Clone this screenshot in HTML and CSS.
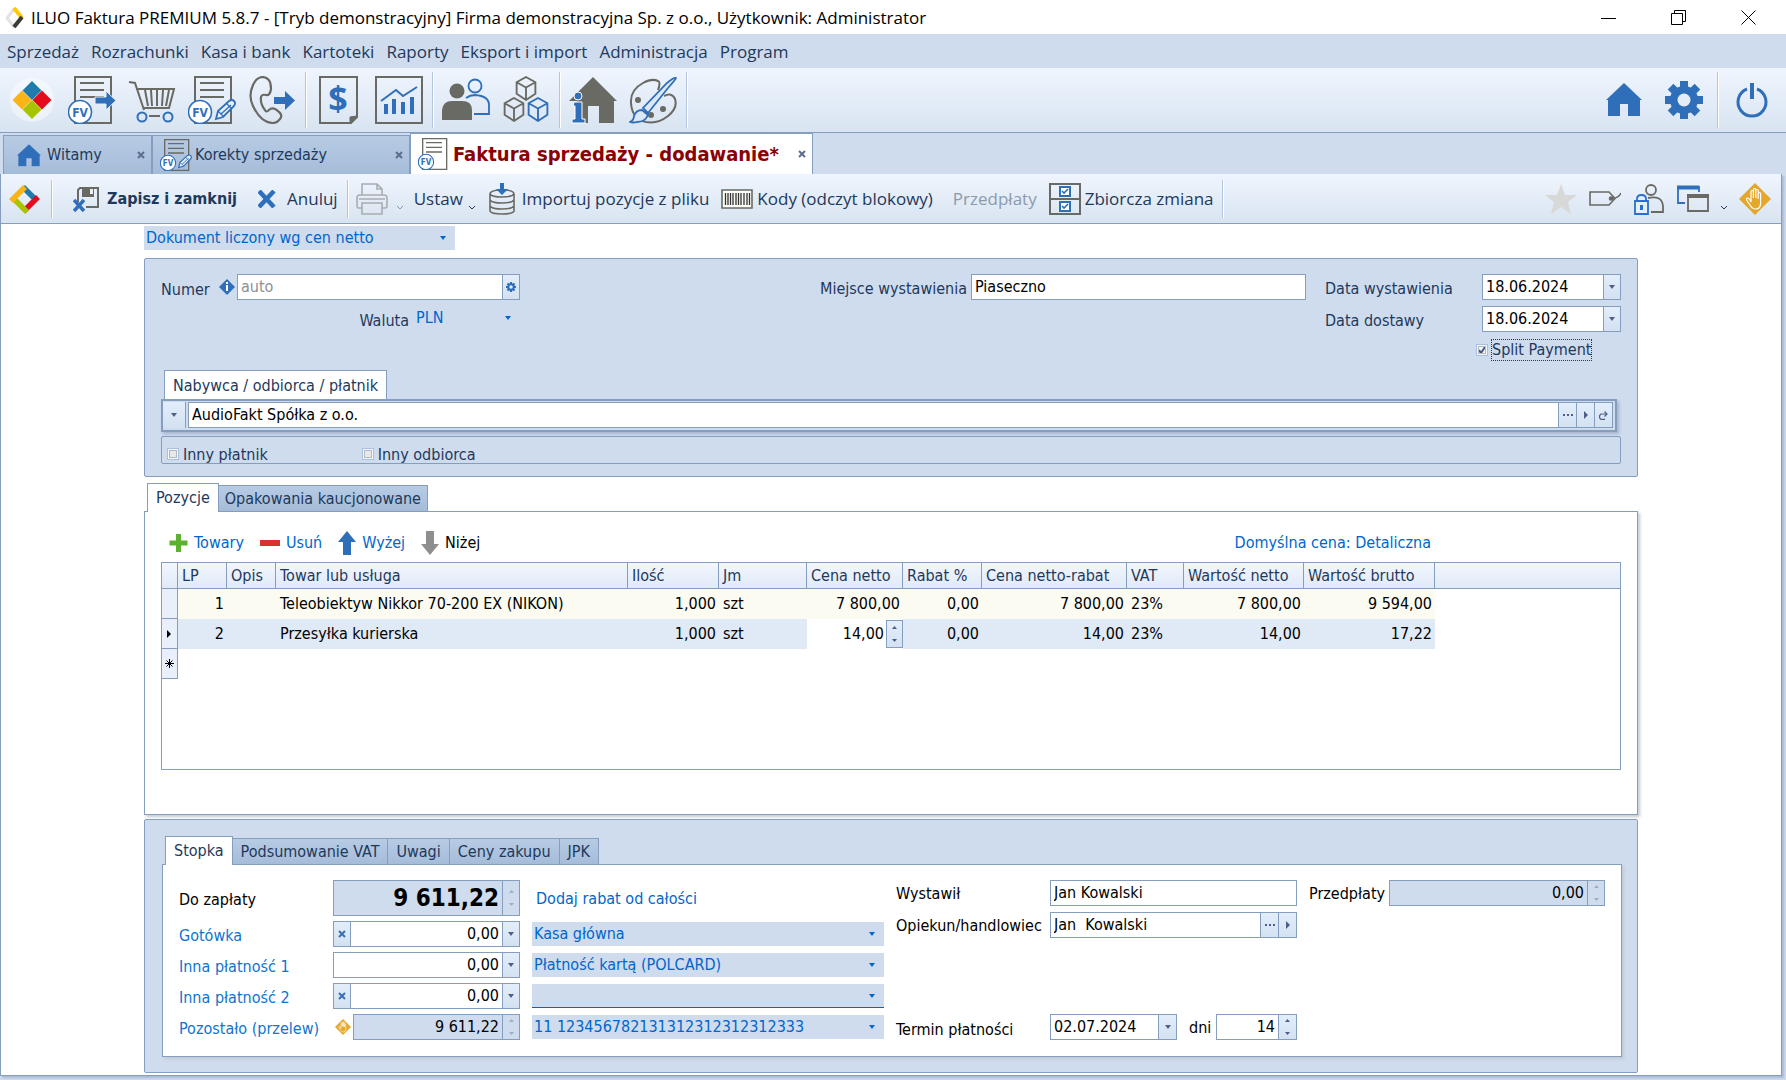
FILE: index.html
```
<!DOCTYPE html>
<html lang="pl">
<head>
  <meta charset="utf-8">
  <title>ILUO Faktura PREMIUM 5.8.7</title>
  <link rel="stylesheet" href="styles.css">
</head>
<body>

  <!-- shared icons -->
  <svg class="sprite" aria-hidden="true">
    <symbol id="i-doc" viewBox="0 0 48 48">
      <path d="M7 1h36v46H7z" fill="none" stroke="#6a6a64" stroke-width="2"/>
      <path d="M12 7h24M12 14h24M12 21h24" stroke="#6a6a64" stroke-width="2"/>
      <circle cx="12" cy="36" r="11.5" fill="#fff" stroke="#2f6fba" stroke-width="1.6"/>
      <text x="12" y="41" text-anchor="middle" class="fv">FV</text>
    </symbol>
    <symbol id="i-pen" viewBox="0 0 48 48">
      <path d="M28 43l2-8 11-10q3-2 5 0t0 5l-11 11z" fill="#e8eff8" stroke="#2f6fba" stroke-width="1.8"/>
      <path d="M30 35l6 6M38 27l6 6M33 38l10-9" fill="none" stroke="#2f6fba" stroke-width="1.3"/>
    </symbol>
    <symbol id="i-home" viewBox="0 0 36 34">
      <path d="M18 0l18 17h-2v16H22V21h-8v12H2V17H0z" fill="#2f6fba"/>
    </symbol>
    <symbol id="i-x" viewBox="0 0 8 8"><path d="M1 1l6 6M7 1l-6 6" stroke="currentColor" stroke-width="2"/></symbol>
    <symbol id="i-down" viewBox="0 0 6 4"><path d="M0 0h6L3 4z" fill="currentColor"/></symbol>
    <symbol id="i-right" viewBox="0 0 4 8"><path d="M0 0v8l4-4z" fill="currentColor"/></symbol>
    <symbol id="i-dots" viewBox="0 0 10 2"><path d="M0 1h2m2 0h2m2 0h2" stroke="currentColor" stroke-width="2"/></symbol>
    <symbol id="i-spin" viewBox="0 0 5 16"><path d="M0 3h5L2.500 0zM0 13h5L2.500 16z" fill="currentColor"/></symbol>
    <symbol id="i-gear" viewBox="0 0 38 38">
      <g fill="#2f6fba"><path d="M15 0h8v38h-8zM0 15h38v8H0z"/><path d="M15 0h8v38h-8zM0 15h38v8H0z" transform="rotate(45 19 19)"/><circle cx="19" cy="19" r="14"/></g>
      <circle cx="19" cy="19" r="6.500" fill="#e4edf7"/>
    </symbol>
    <symbol id="i-hand" viewBox="0 0 32 32">
      <path d="M16 0l16 16-16 16L0 16z" fill="#e5a72a"/>
      <path d="M12 17V9q0-1.500 1.200-1.500T14.400 9v6V7q0-1.500 1.200-1.500T16.800 7v8V8q0-1.500 1.200-1.500T19.200 8v8-5q0-1.500 1.200-1.500t1.200 1.500v9q0 6-5 6-3 0-5-3l-4-6q-.5-2 1-2t3.400 4z" fill="none" stroke="#fff" stroke-width="1.200"/>
    </symbol>
    <symbol id="i-cube" viewBox="0 0 22 24">
      <path d="M11 1l9 5v11l-9 6-9-6V6zM2 6l9 5 9-5M11 11v12" fill="none" stroke="currentColor" stroke-width="1.800"/>
    </symbol>
  </svg>

  <header class="titlebar">
    <svg class="app-icon" viewBox="0 0 18 22"><path d="M9 1l-8 10 8 10" fill="none" stroke="#e3e3e3" stroke-width="3"/><path d="M8 1l8 10" stroke="#ffc800" stroke-width="4"/><path d="M16 10L8 20" stroke="#3a3a38" stroke-width="4"/></svg>
    <h1>ILUO Faktura PREMIUM 5.8.7 - [Tryb demonstracyjny] Firma demonstracyjna Sp. z o.o., Użytkownik: Administrator</h1>
    <div class="window-buttons">
      <button aria-label="Minimalizuj"><svg viewBox="0 0 16 16"><path d="M0 8.500h15"/></svg></button>
      <button aria-label="Przywróć"><svg viewBox="0 0 16 16"><path d="M.5 3.500h11v11H.5zM3.500 3V.5h11v11H12"/></svg></button>
      <button aria-label="Zamknij"><svg viewBox="0 0 16 16"><path d="M.5.5l14 14M14.500.5l-14 14"/></svg></button>
    </div>
  </header>

  <nav class="menu">
    <a href="#">Sprzedaż</a>
    <a href="#">Rozrachunki</a>
    <a href="#">Kasa i bank</a>
    <a href="#">Kartoteki</a>
    <a href="#">Raporty</a>
    <a href="#">Eksport i import</a>
    <a href="#">Administracja</a>
    <a href="#">Program</a>
  </nav>

  <div class="toolbar">
    <div class="tool-group">
      <button aria-label="ILUO"><svg viewBox="0 0 48 48"><circle cx="24" cy="24" r="22" fill="#fff" opacity=".45"/><path d="M24 5l9.500 9.500L24 24l-9.500-9.500z" fill="#1f7bab"/><path d="M34 14.500l9.500 9.500-9.500 9.500L24.500 24z" fill="#e30b1c"/><path d="M24 24l9.500 9.500L24 43l-9.500-9.500z" fill="#a8c400"/><path d="M14 14.500l9.500 9.500-9.500 9.500L4.500 24z" fill="#fbb417"/></svg></button>
      <button aria-label="Faktura sprzedaży"><svg viewBox="0 0 48 48"><use href="#i-doc"/><path d="M27 21h11v-6l10 9.500L38 34v-6H27z" fill="#2f6fba" stroke="#e8eff8" stroke-width="1"/></svg></button>
      <button aria-label="Zakupy"><svg viewBox="0 0 48 48" fill="none" stroke="#6a6a64" stroke-width="2"><path d="M1 6l6 1 9 27M8 13h38l-5 19H15M17 14l3 16M23 14l1 16M29 14v16M35 14l-1 16M41 14l-3 16M21 40h11"/><circle cx="14" cy="41" r="4.500" stroke="#2f6fba"/><circle cx="40" cy="41" r="4.500" stroke="#2f6fba"/></svg></button>
      <button aria-label="Korekty"><svg viewBox="0 0 48 48"><use href="#i-doc"/><use href="#i-pen"/></svg></button>
      <button aria-label="Kontakty"><svg viewBox="0 0 48 48"><path d="M14 1q-6 1-9 8-5 11 0 21 8 17 20 17 4 0 7-4 3-4-1-7-6-6-10-2-3 3-4 0-5-6-4-13 1-3 5-2 4 1 5-6 0-12-9-12z" fill="none" stroke="#6a6a64" stroke-width="2.200"/><path d="M26 21h11v-6l10 9.500L37 34v-6H26z" fill="#2f6fba"/></svg></button>
    </div>
    <div class="tool-group">
      <button aria-label="Płatności"><svg viewBox="0 0 48 48"><path d="M5 1h37v40l-6 6H5z" fill="none" stroke="#6a6a64" stroke-width="2"/><path d="M42 40l-7 7v-6z" fill="#6a6a64" stroke="#6a6a64"/><text x="23" y="35" text-anchor="middle" class="dollar">$</text></svg></button>
      <button aria-label="Raporty"><svg viewBox="0 0 48 48"><path d="M1 1h46v46H1z" fill="none" stroke="#6a6a64" stroke-width="2"/><path d="M6 25l15-11 7 6 14-9" fill="none" stroke="#2f6fba" stroke-width="2"/><path d="M11 28v10M19 23v15M28 26v12M37 21v17" stroke="#2f6fba" stroke-width="4"/></svg></button>
    </div>
    <div class="tool-group">
      <button aria-label="Kontrahenci"><svg viewBox="0 0 48 48"><circle cx="15" cy="15" r="7.500" fill="#6a6a64"/><path d="M0 44V34q1-9 10-9h10q10 0 10 9v10z" fill="#6a6a64"/><circle cx="33" cy="10" r="6.500" fill="none" stroke="#2f6fba" stroke-width="1.800"/><path d="M24 22q4-3 9-3 14 1 14 10v9H32" fill="none" stroke="#2f6fba" stroke-width="1.800"/></svg></button>
      <button aria-label="Towary"><svg viewBox="0 0 48 48" class="cubes"><use href="#i-cube" x="12" y="0" width="24" height="25"/><use href="#i-cube" x="0" y="21" width="24" height="25"/><use href="#i-cube" x="24" y="21" width="24" height="25" class="blue"/></svg></button>
    </div>
    <div class="tool-group">
      <button aria-label="Firma"><svg viewBox="0 0 48 48"><path d="M24 1l24 24h-3v22H30V30H19v17H8V25H0z" fill="#6a6a64"/><path d="M5 26h8v17h3v4H3v-4h3V30H4z" fill="#2f6fba" stroke="#fff" stroke-width="1"/><circle cx="9" cy="20" r="4" fill="#2f6fba" stroke="#fff"/></svg></button>
      <button aria-label="Wygląd"><svg viewBox="0 0 48 48"><path d="M29 14q3-8 0-9-6-3-15 2Q1 14 2 27q1 16 15 19 12 2 22-6 10-8 7-17-3-7-11-3" fill="none" stroke="#6a6a64" stroke-width="2"/><g fill="#6a6a64"><circle cx="9" cy="24" r="3"/><circle cx="22" cy="39" r="3"/><circle cx="34" cy="33" r="3"/></g><path d="M47 2q-2-1-9 5L14 32l5 5 20-25q8-9 8-10zM13 34l6 5q-3 7-11 7-4 1-7 0 4-2 4-6 2-6 8-6z" fill="#dce8f5" stroke="#2f6fba" stroke-width="1.800"/></svg></button>
    </div>
    <div class="tool-group tool-group-end">
      <button aria-label="Start"><svg viewBox="0 0 48 48"><use href="#i-home" x="6" y="7" width="36" height="34"/></svg></button>
      <button aria-label="Ustawienia"><svg viewBox="0 0 48 48"><use href="#i-gear" x="5" y="5" width="38" height="38"/></svg></button>
    </div>
    <div class="tool-last">
      <button aria-label="Wyjście"><svg viewBox="0 0 48 48" fill="none" stroke="#2f6fba"><path d="M19 13a14 14 0 1 0 10 0" stroke-width="3"/><path d="M24 7v16" stroke-width="4"/></svg></button>
    </div>
  </div>

  <div class="tabs">
    <div class="tab">
      <svg class="tab-home" viewBox="0 0 36 34"><use href="#i-home"/></svg>
      <span>Witamy</span>
      <button class="tab-close" aria-label="Zamknij"><svg><use href="#i-x"/></svg></button>
    </div>
    <div class="tab tab-wide">
      <svg class="tab-doc" viewBox="0 0 48 48"><use href="#i-doc"/><use href="#i-pen"/></svg>
      <span>Korekty sprzedaży</span>
      <button class="tab-close" aria-label="Zamknij"><svg><use href="#i-x"/></svg></button>
    </div>
    <div class="tab tab-active">
      <svg class="tab-doc" viewBox="0 0 48 48"><use href="#i-doc"/></svg>
      <span>Faktura sprzedaży - dodawanie*</span>
      <button class="tab-close" aria-label="Zamknij"><svg><use href="#i-x"/></svg></button>
    </div>
  </div>

  <main class="document">
    <div class="actions">
      <button class="logo" aria-label="ILUO"><svg viewBox="0 0 32 32" fill="none" stroke-width="5.500"><path d="M14 4l13 13" stroke="#1f7bab"/><path d="M29 14L15 28" stroke="#e30b1c"/><path d="M18 29L4 15" stroke="#a8c400"/><path d="M2 18L16 4" stroke="#fbb417"/></svg></button>
      <i class="sep"></i>
      <button class="strong"><svg class="ic-save" viewBox="0 0 26 26"><path d="M5 16V4l2-2h18v19H13" fill="none" stroke="#6a6a64" stroke-width="2"/><path d="M9 2h12v9H9z" fill="#6a6a64"/><path d="M17 3h3v5h-3z" fill="#eee"/><path d="M1 14l10 11M11 14L1 25" stroke="#2f6fba" stroke-width="3.500"/></svg>Zapisz i zamknij</button>
      <button class="cancel"><svg class="ic-cancel" viewBox="0 0 18 18"><path d="M1 1l15 16M16 1L1 17" stroke="#2f6fba" stroke-width="4.500"/></svg>Anuluj</button>
      <i class="sep"></i>
      <button aria-label="Drukuj" disabled><svg class="ic-32" viewBox="0 0 32 32" fill="none" stroke="#a9adb0" stroke-width="1.600"><path d="M6 12V1h15l5 5v6M21 1v5h5M6 25H2q-1-1-1-2v-8q0-3 3-3h24q3 0 3 3v8q0 2-2 2h-3M6 20h20v11H6zM3 16h26"/></svg></button>
      <svg class="caret caret-off" viewBox="0 0 6 5"><path d="M0 1l3 3 3-3"/></svg>
      <button>Ustaw</button>
      <svg class="caret" viewBox="0 0 6 5"><path d="M0 1l3 3 3-3"/></svg>
      <button class="import"><svg class="ic-db" viewBox="0 0 26 32" fill="none" stroke="#6a6a64" stroke-width="1.600"><path d="M9 7q-8 1-8 4v17q1 3 12 3t12-3V11q0-3-8-4M1 11q2 3 12 3t12-3M1 17q2 3 12 3t12-3M1 23q2 3 12 3t12-3"/><path d="M11 0h4v6h4l-6 6-6-6h4z" fill="#2f6fba" stroke="none"/></svg>Importuj pozycje z pliku</button>
      <button class="codes"><svg class="ic-codes" viewBox="0 0 32 20"><path d="M1 1h30v18H1z" fill="#fdfdf8" stroke="#6a6a64" stroke-width="1.600"/><path d="M4.500 4v12M7 4v12M9.500 4v12M12 4v12M15 4v12M17.500 4v12M20 4v12M23 4v12M26 4v12M28.500 4v12" stroke="#333" stroke-width="1.300"/></svg>Kody (odczyt blokowy)</button>
      <button disabled>Przedpłaty</button>
      <button class="bulk"><svg class="ic-32" viewBox="0 0 32 32" fill="none"><path d="M1 1h30v30H1zM1 16h30" stroke="#6a6a64" stroke-width="2"/><path d="M11 4h10v9H11zM11 19h10v9H11z" stroke="#2f6fba" stroke-width="2" fill="#fff"/><path d="M13 8l2 2 4-4M13 23l2 2 4-4" stroke="#2f6fba" stroke-width="1.600"/></svg>Zbiorcza zmiana</button>
      <i class="sep"></i>
      <div class="actions-end">
        <button aria-label="Ulubione"><svg class="ic-32" viewBox="0 0 32 32"><path d="M16 1l4 11h12l-9 7 3 12-10-7-10 7 3-12-9-7h12z" fill="#d8d8d8"/></svg></button>
        <button aria-label="Etykieta"><svg class="ic-32" viewBox="0 0 32 32" fill="none" stroke="#6a6a64" stroke-width="1.600"><path d="M1 9h19l6 6.500-6 6.500H1zM22 15q7 1 10-5"/><circle cx="22" cy="15.500" r="1.500" fill="#6a6a64"/></svg></button>
        <button aria-label="Uprawnienia"><svg class="ic-32" viewBox="0 0 32 32" fill="none" stroke="#6a6a64" stroke-width="1.800"><circle cx="18" cy="7" r="5"/><path d="M15 15q14-3 15 8v6H18"/><path d="M2 18h13v13H2zM4 18v-2q0-4 4.500-4t4.500 4v2" fill="#e6eef8" stroke="#2a6fd0"/><path d="M8.500 22v5" stroke="#2a6fd0" stroke-width="3"/></svg></button>
        <button aria-label="Okna"><svg class="ic-32" viewBox="0 0 32 32" fill="none"><path d="M8 20H1V4h21v5" stroke="#2f6fba" stroke-width="1.800"/><path d="M0 4.500h22" stroke="#2f6fba" stroke-width="4"/><path d="M11 12h20v16H11z" stroke="#6a6a64" stroke-width="1.800"/><path d="M10 13h22" stroke="#6a6a64" stroke-width="4"/></svg></button>
        <svg class="caret" viewBox="0 0 6 5"><path d="M0 1l3 3 3-3"/></svg>
        <button aria-label="Blokada"><svg class="ic-32"><use href="#i-hand"/></svg></button>
      </div>
    </div>

    <form class="content">
      <select class="link-select doc-kind" aria-label="Rodzaj dokumentu"><option>Dokument liczony wg cen netto</option></select>

      <section class="panel head">
        <div class="head-row">
          <div class="number">
            <label for="numer">Numer</label>
            <svg class="info" viewBox="0 0 16 16"><path d="M8 0l8 8-8 8-8-8z" fill="#2f6fba"/><path d="M8 3v2M8 6v6" stroke="#fff" stroke-width="2"/></svg>
            <div class="field">
              <input id="numer" type="text" placeholder="auto">
              <button type="button" aria-label="Numeracja"><svg class="g-gear"><use href="#i-gear"/></svg></button>
            </div>
            <div class="currency">
              <label for="waluta">Waluta</label>
              <select id="waluta" class="link-select"><option>PLN</option></select>
            </div>
          </div>
          <div class="place">
            <label for="miejsce">Miejsce wystawienia</label>
            <div class="field"><input id="miejsce" type="text" value="Piaseczno"></div>
          </div>
          <div class="dates">
            <label for="data-w">Data wystawienia</label>
            <div class="field"><input id="data-w" type="text" value="18.06.2024"><button type="button" aria-label="Kalendarz"><svg class="g-down"><use href="#i-down"/></svg></button></div>
            <label for="data-d">Data dostawy</label>
            <div class="field"><input id="data-d" type="text" value="18.06.2024"><button type="button" aria-label="Kalendarz"><svg class="g-down"><use href="#i-down"/></svg></button></div>
            <div class="check split"><input id="split" type="checkbox" checked><label for="split">Split Payment</label></div>
          </div>
        </div>

        <div class="buyer">
          <label class="buyer-tab" for="nabywca">Nabywca / odbiorca / płatnik</label>
          <div class="buyer-box">
            <button type="button" class="buyer-drop" aria-label="Rozwiń"><svg class="g-down"><use href="#i-down"/></svg></button>
            <div class="field">
              <input id="nabywca" type="text" value="AudioFakt Spółka z o.o.">
              <button type="button" aria-label="Wybierz"><svg class="g-dots"><use href="#i-dots"/></svg></button>
              <button type="button" aria-label="Otwórz"><svg class="g-right"><use href="#i-right"/></svg></button>
              <button type="button" aria-label="Odśwież"><svg class="g-redo" viewBox="0 0 9 9"><path d="M6 8.400H2L.6 7V4.500L2 3h6M5.500.5L8 3 5.500 5.500" fill="none" stroke="currentColor" stroke-width="1.200"/></svg></button>
            </div>
          </div>
          <div class="others">
            <div class="check"><input id="platnik" type="checkbox"><label for="platnik">Inny płatnik</label></div>
            <div class="check"><input id="odbiorca" type="checkbox"><label for="odbiorca">Inny odbiorca</label></div>
          </div>
        </div>
      </section>

      <div class="page-tabs">
        <button type="button" class="active">Pozycje</button>
        <button type="button">Opakowania kaucjonowane</button>
      </div>
      <section class="page items">
        <div class="commands">
          <a href="#"><svg class="c-plus" viewBox="0 0 18 18"><path d="M9 0v18M0 9h18" stroke="#5cb130" stroke-width="5"/></svg>Towary</a>
          <a href="#"><svg class="c-minus" viewBox="0 0 20 18"><path d="M0 9h20" stroke="#d93030" stroke-width="6"/></svg>Usuń</a>
          <a href="#"><svg class="c-arrow" viewBox="0 0 18 24"><path d="M9 0l9 11h-5v13H5V11H0z" fill="#2f6fba"/></svg>Wyżej</a>
          <a href="#" class="off"><svg class="c-arrow" viewBox="0 0 18 24"><path d="M9 24l9-11h-5V0H5v13H0z" fill="#8e8e8e"/></svg>Niżej</a>
          <a href="#" class="price">Domyślna cena: Detaliczna</a>
        </div>
        <div class="grid">
          <table>
            <colgroup><col class="w-mark"><col class="w-lp"><col class="w-lp"><col class="w-name"><col class="w-qty"><col class="w-jm"><col class="w-price"><col class="w-disc"><col class="w-net"><col class="w-vat"><col class="w-sum"><col class="w-gross"><col></colgroup>
            <thead>
              <tr><th></th><th>LP</th><th>Opis</th><th>Towar lub usługa</th><th>Ilość</th><th>Jm</th><th>Cena netto</th><th>Rabat %</th><th>Cena netto-rabat</th><th>VAT</th><th>Wartość netto</th><th>Wartość brutto</th><th></th></tr>
            </thead>
            <tbody>
              <tr class="odd"><td class="mark"></td><td class="num">1</td><td></td><td>Teleobiektyw Nikkor 70-200 EX (NIKON)</td><td class="num">1,000</td><td>szt</td><td class="num">7 800,00</td><td class="num">0,00</td><td class="num">7 800,00</td><td>23%</td><td class="num">7 800,00</td><td class="num">9 594,00</td><td></td></tr>
              <tr class="current"><td class="mark"><svg class="g-right"><use href="#i-right"/></svg></td><td class="num">2</td><td></td><td>Przesyłka kurierska</td><td class="num">1,000</td><td>szt</td><td class="editing"><div class="cell-edit"><input type="text" value="14,00" aria-label="Cena netto"><button type="button" aria-label="Zmień"><svg class="g-spin"><use href="#i-spin"/></svg></button></div></td><td class="num">0,00</td><td class="num">14,00</td><td>23%</td><td class="num">14,00</td><td class="num">17,22</td><td></td></tr>
              <tr><td class="mark"><svg class="g-star" viewBox="0 0 9 9"><path d="M4.500 0v9M0 4.500h9M1.500 1.500l6 6M7.500 1.500l-6 6" stroke="currentColor" stroke-width="1"/></svg></td><td colspan="12"></td></tr>
            </tbody>
          </table>
        </div>
      </section>

      <section class="panel foot">
        <div class="page-tabs">
          <button type="button" class="active">Stopka</button>
          <button type="button">Podsumowanie VAT</button>
          <button type="button">Uwagi</button>
          <button type="button">Ceny zakupu</button>
          <button type="button">JPK</button>
        </div>
        <div class="page summary">
          <div class="payments">
            <label for="zaplata">Do zapłaty</label>
            <div class="field field-off total"><input id="zaplata" type="text" value="9 611,22" readonly><button type="button" aria-label="Zmień" disabled><svg class="g-spin"><use href="#i-spin"/></svg></button></div>
            <a href="#" class="discount">Dodaj rabat od całości</a>

            <label for="gotowka" class="blue-text">Gotówka</label>
            <div class="field money"><button type="button" class="clear" aria-label="Wyczyść"><svg><use href="#i-x"/></svg></button><input id="gotowka" type="text" value="0,00"><button type="button" aria-label="Rozwiń"><svg class="g-down"><use href="#i-down"/></svg></button></div>
            <select class="link-select" aria-label="Kasa"><option>Kasa główna</option></select>

            <label for="inna1" class="blue-text">Inna płatność 1</label>
            <div class="field money"><input id="inna1" type="text" value="0,00"><button type="button" aria-label="Rozwiń"><svg class="g-down"><use href="#i-down"/></svg></button></div>
            <select class="link-select" aria-label="Forma płatności 1"><option>Płatność kartą (POLCARD)</option></select>

            <label for="inna2" class="blue-text">Inna płatność 2</label>
            <div class="field money"><button type="button" class="clear" aria-label="Wyczyść"><svg><use href="#i-x"/></svg></button><input id="inna2" type="text" value="0,00"><button type="button" aria-label="Rozwiń"><svg class="g-down"><use href="#i-down"/></svg></button></div>
            <select class="link-select empty" aria-label="Forma płatności 2"><option></option></select>

            <label for="przelew" class="blue-text">Pozostało (przelew)</label>
            <div class="rest">
              <svg class="hand-small"><use href="#i-hand"/></svg>
              <div class="field field-off money"><input id="przelew" type="text" value="9 611,22" readonly><button type="button" aria-label="Zmień" disabled><svg class="g-spin"><use href="#i-spin"/></svg></button></div>
            </div>
            <select class="link-select" aria-label="Konto"><option>11 123456782131312312312312333</option></select>
          </div>

          <div class="people">
            <label for="wystawil">Wystawił</label>
            <div class="field"><input id="wystawil" type="text" value="Jan Kowalski"></div>
            <label for="opiekun">Opiekun/handlowiec</label>
            <div class="field"><input id="opiekun" type="text" value="Jan  Kowalski"><button type="button" aria-label="Wybierz"><svg class="g-dots"><use href="#i-dots"/></svg></button><button type="button" aria-label="Otwórz"><svg class="g-right"><use href="#i-right"/></svg></button></div>
            <label for="termin" class="term">Termin płatności</label>
            <div class="term-fields">
              <div class="field"><input id="termin" type="text" value="02.07.2024"><button type="button" aria-label="Kalendarz"><svg class="g-down"><use href="#i-down"/></svg></button></div>
              <label for="dni">dni</label>
              <div class="field money days"><input id="dni" type="text" value="14"><button type="button" aria-label="Zmień"><svg class="g-spin"><use href="#i-spin"/></svg></button></div>
            </div>
          </div>

          <div class="prepaid">
            <label for="przedplaty">Przedpłaty</label>
            <div class="field field-off money"><input id="przedplaty" type="text" value="0,00" readonly><button type="button" aria-label="Zmień" disabled><svg class="g-spin"><use href="#i-spin"/></svg></button></div>
          </div>
        </div>
      </section>
    </form>
  </main>

</body>
</html>
```
FILE: styles.css
```
* {
  box-sizing: border-box;
}
body {
  margin: 0;
  min-height: 100vh;
  display: flex;
  flex-direction: column;
  background: #cfdcee;
  color: #1e395b;
  font: 16px/20px "DejaVu Sans Condensed", "DejaVu Sans", sans-serif;
}
button, input, select {
  font: inherit;
  color: inherit;
  margin: 0;
  padding: 0;
  border: 0;
  border-radius: 0;
  background: none;
}
button {
  display: flex;
  align-items: center;
  justify-content: center;
  white-space: nowrap;
}
input {
  min-width: 0;
  outline: none;
}
a {
  color: #0066cc;
  text-decoration: none;
}
svg {
  display: block;
  flex: none;
}
.sprite {
  display: none;
}
.fv {
  font: bold 12px "DejaVu Sans Condensed", sans-serif;
  fill: #2f6fba;
}
.dollar {
  font: bold 34px "Open Sans", sans-serif;
  fill: #2f6fba;
}

/* title bar and menu */
.titlebar {
  height: 34px;
  display: flex;
  align-items: center;
  background: #fff;
  color: #000;
  padding: 1px 2px 0 6px;
}
.titlebar h1 {
  margin: 0;
  padding: 0 7px;
  flex: 1;
  font: 17px/24px "Open Sans", sans-serif;
}
.app-icon {
  width: 18px;
  height: 22px;
}
.window-buttons {
  display: flex;
}
.window-buttons button {
  width: 70px;
  height: 33px;
}
.window-buttons svg {
  width: 16px;
  height: 16px;
  fill: none;
  stroke: #000;
}
.menu {
  height: 34px;
  display: flex;
  align-items: center;
  gap: 12px;
  padding: 1px 7px 0;
  font: 17px/24px "Open Sans", sans-serif;
}
.menu a {
  color: #1e395b;
}

/* main toolbar */
.toolbar {
  height: 65px;
  display: flex;
  align-items: center;
  background: linear-gradient(#eff5fe, #d8e4f1);
  border-bottom: 1px solid #859ebf;
}
.toolbar svg {
  width: 48px;
  height: 48px;
}
.tool-group {
  height: 56px;
  display: flex;
  align-items: center;
  gap: 12px;
  padding: 0 9px;
  border-right: 1px solid #b4c5dc;
  box-shadow: 1px 0 #fff;
}
.tool-group:first-child {
  padding-left: 8px;
}
.tool-group-end {
  margin-left: auto;
}
.tool-last {
  padding: 0 10px;
}
.cubes {
  color: #6a6a64;
}
.cubes .blue {
  color: #2f6fba;
}

/* document tabs */
.tabs {
  height: 41px;
  display: flex;
  align-items: flex-end;
  padding-left: 3px;
}
.tab {
  width: 149px;
  height: 39px;
  display: flex;
  align-items: center;
  padding: 0 5px 0 13px;
  border: 1px solid #859ebf;
  border-bottom: 0;
  background: linear-gradient(#b7cbe4, #a5bcd9);
}
.tab-wide {
  width: 258px;
  padding-left: 7px;
}
.tab-active {
  width: 403px;
  height: 41px;
  padding-left: 7px;
  background: #fff;
  color: #8b0000;
  font-size: 20px;
  font-weight: bold;
}
.tab span {
  flex: 1;
  white-space: nowrap;
}
.tab-home {
  width: 24px;
  height: 23px;
  margin-right: 6px;
}
.tab-doc {
  width: 32px;
  height: 32px;
  margin-right: 3px;
}
.tab-close {
  width: 10px;
  height: 16px;
  color: #5d6d8e;
}
.tab-close svg, .clear svg {
  width: 8px;
  height: 8px;
}

/* document frame and its actions */
.document {
  flex: 1;
  margin: 0 4px 4px 0;
  background: #fff;
  border: 1px solid #859ebf;
  border-top: 0;
  box-shadow: 2px 2px 2px #a9bad2;
}
.actions {
  height: 50px;
  display: flex;
  align-items: center;
  background: linear-gradient(#eff5fe, #d8e4f1);
  border-top: 1px solid #eff5fe;
  border-bottom: 1px solid #859ebf;
  font: 17px/24px "Open Sans", sans-serif;
  white-space: nowrap;
}
.logo {
  padding: 0 10px 0 8px;
}
.logo svg, .ic-32 {
  width: 32px;
  height: 32px;
}
.sep {
  width: 1px;
  height: 38px;
  background: #b4c5dc;
  box-shadow: 1px 0 #fff;
}
.strong {
  font: bold 16px/24px "DejaVu Sans Condensed", sans-serif;
  gap: 8px;
  margin: 0 21px 0 21px;
}
.ic-save {
  width: 26px;
  height: 26px;
}
.cancel {
  gap: 11px;
  margin-right: 9px;
}
.ic-cancel {
  width: 18px;
  height: 18px;
}
.sep + button[disabled] {
  margin-left: 8px;
}
.caret {
  width: 6px;
  height: 5px;
  margin: 16px 11px 0 6px;
  fill: none;
  stroke: #1e395b;
}
.caret-off {
  margin-left: 9px;
  stroke: #8a99ad;
}
.import {
  gap: 7px;
  margin: 0 12px 0 3px;
}
.ic-db {
  width: 26px;
  height: 32px;
}
.codes {
  gap: 4px;
  margin-right: 20px;
}
.ic-codes {
  width: 32px;
  height: 20px;
}
.actions button[disabled] {
  color: #8d9aab;
}
.bulk {
  gap: 4px;
  margin: 0 8px 0 12px;
}
.actions-end {
  margin-left: auto;
  display: flex;
  align-items: center;
  gap: 12px;
  padding-right: 10px;
}
.actions-end .caret {
  margin: 16px 0 0;
}

/* form controls */
.field {
  display: flex;
  height: 26px;
  min-width: 0;
  background: #fff;
  border: 1px solid #859ebf;
  color: #000;
}
.field input {
  flex: 1;
  width: 0;
  padding: 0 3px;
}
.field button {
  width: 17px;
  border-left: 1px solid #859ebf;
  background: linear-gradient(#e3eefb, #d3e1f1);
  color: #4d5f87;
}
.field input::placeholder {
  color: #8c8f94;
  opacity: 1;
}
.field .clear {
  border-left: 0;
  border-right: 1px solid #859ebf;
  color: #3b6fb4;
}
.field-off, .field-off button[disabled] {
  background: #cfdcee;
}
.field-off button[disabled] {
  color: #9caec8;
}
.money input {
  text-align: right;
}
.g-down {
  width: 6px;
  height: 4px;
}
.g-right {
  width: 4px;
  height: 8px;
}
.g-dots {
  width: 10px;
  height: 2px;
}
.g-spin {
  width: 5px;
  height: 16px;
}
.g-gear {
  width: 10px;
  height: 10px;
}
.g-redo, .g-star {
  width: 9px;
  height: 9px;
}
.link-select {
  appearance: none;
  height: 24px;
  padding: 0 24px 0 2px;
  color: #0066cc;
  background: #cfdcee url("data:image/svg+xml,%3Csvg xmlns='http://www.w3.org/2000/svg' width='6' height='4'%3E%3Cpath d='M0 0h6L3 4z' fill='%230066cc'/%3E%3C/svg%3E") no-repeat right 9px center;
}
.empty {
  border-bottom: 1px solid #0066cc;
}
.check {
  display: flex;
  align-items: center;
  gap: 4px;
}
.check input {
  appearance: none;
  width: 12px;
  height: 12px;
  border: 1px solid #a9c0e0;
  background: #e6e8ea;
  box-shadow: inset 0 0 0 1px #f4f8fd, inset 0 0 0 2px #b4b9c0;
}
.check input:checked {
  background: #f4f4f4 url("data:image/svg+xml,%3Csvg xmlns='http://www.w3.org/2000/svg' width='10' height='10'%3E%3Cpath d='M2 5l2 3 4-6' fill='none' stroke='%23405a8c' stroke-width='2'/%3E%3C/svg%3E") no-repeat center;
}

/* header panel */
.content {
  padding: 2px 143px 0;
}
.doc-kind {
  display: block;
  width: 311px;
}
.panel {
  border: 1px solid #859ebf;
  border-radius: 2px;
  background: #cfdcee;
}
.head {
  margin-top: 8px;
  padding: 15px 16px 12px;
}
.head-row {
  display: flex;
  align-items: flex-start;
  gap: 19px;
}
.head label {
  padding-top: 5px;
}
.number {
  width: 359px;
  margin-right: auto;
  display: grid;
  grid-template-columns: 58px 16px 1fr;
  row-gap: 6px;
  align-items: center;
}
.number .field {
  margin-left: 2px;
}
.currency {
  grid-column: 1 / -1;
  display: flex;
  justify-content: flex-end;
  gap: 5px;
}
.currency .link-select {
  width: 106px;
}
.info {
  width: 16px;
  height: 16px;
}
.place {
  display: flex;
  gap: 4px;
}
.place .field {
  width: 335px;
}
.dates {
  width: 296px;
  display: grid;
  grid-template-columns: 157px 1fr;
  row-gap: 6px;
}
.split {
  grid-column: 2;
  margin: 2px 0 0 -6px;
}
.head .split label {
  padding: 0;
  outline: 1px dotted #1e395b;
}
.buyer {
  margin-top: 10px;
}
.head .buyer-tab {
  display: inline-block;
  height: 29px;
  margin-left: 3px;
  padding: 5px 8px 4px;
  background: #fff;
  border: 1px solid #859ebf;
  border-bottom: 0;
}
.buyer-box {
  display: flex;
  gap: 2px;
  margin-right: 4px;
  padding: 1px 2px 2px 0;
  border: 2px solid #859ebf;
  box-shadow: 2px 2px 3px #a3b4cc;
}
.buyer-box .field {
  flex: 1;
}
.buyer-box .field button {
  width: 18px;
}
.buyer-drop {
  width: 23px;
  background: linear-gradient(#e3eefb, #d3e1f1);
  border-right: 1px solid #859ebf;
  color: #4d5f87;
}
.others {
  height: 28px;
  margin-top: 4px;
  padding: 7px 5px 0;
  display: flex;
  gap: 94px;
  border: 1px solid #859ebf;
  border-radius: 2px;
}
.others label {
  padding-top: 3px;
}

/* pages */
.page-tabs {
  display: flex;
  align-items: flex-end;
  margin: 6px 0 0 3px;
}
.page-tabs button {
  height: 26px;
  padding: 0 6px;
  background: linear-gradient(#b7cbe4, #a5bcd9);
  border: 1px solid #859ebf;
  border-left-width: 0;
  border-bottom: 0;
}
.page-tabs .active {
  height: 29px;
  padding: 0 8px;
  margin-bottom: -1px;
  border-left-width: 1px;
  background: #fff;
  z-index: 1;
}
.page {
  background: #fff;
  border: 1px solid #859ebf;
  box-shadow: 2px 2px 3px #c0c9d6;
}
.items {
  padding: 16px 16px 44px;
}
.commands {
  height: 34px;
  display: flex;
  align-items: center;
  gap: 16px;
  padding: 0 8px 4px;
}
.commands a {
  display: flex;
  align-items: center;
  gap: 6px;
}
.commands .off {
  color: #000;
}
.commands .price {
  margin: 0 182px 0 auto;
}
.c-plus {
  width: 19px;
  height: 18px;
}
.c-minus {
  width: 20px;
  height: 18px;
}
.c-arrow {
  width: 18px;
  height: 24px;
}
.grid {
  min-height: 208px;
  border: 1px solid #859ebf;
  color: #000;
}
.grid table {
  width: 100%;
  table-layout: fixed;
  border-spacing: 0;
}
.grid th {
  height: 26px;
  padding: 0 4px;
  text-align: left;
  font-weight: normal;
  white-space: nowrap;
  color: #1e395b;
  background: linear-gradient(#f2f6fd, #e0eaf8);
  border-right: 1px solid #859ebf;
  border-bottom: 1px solid #859ebf;
}
.grid th:last-child {
  border-right: 0;
}
.grid td {
  height: 30px;
  padding: 0 4px;
  white-space: nowrap;
}
.grid .num {
  padding: 0 3px;
  text-align: right;
}
.odd td {
  background: #fcfbf2;
}
.current td {
  background: #e0eaf6;
}
.grid tr td:last-child, .grid .editing {
  background: #fff;
}
.grid .mark {
  padding: 0 5px;
  background: #e9f0fb;
  border-right: 1px solid #859ebf;
  border-bottom: 1px solid #859ebf;
}
.mark .g-star {
  margin-left: -2px;
}
.grid .editing {
  padding: 0;
}
.cell-edit {
  display: flex;
  height: 28px;
}
.cell-edit input {
  flex: 1;
  width: 0;
  padding-right: 2px;
  text-align: right;
}
.cell-edit button {
  width: 17px;
  border: 1px solid #859ebf;
  background: linear-gradient(#e3eefb, #d3e1f1);
  color: #4d5f87;
}
.w-mark { width: 16px; }
.w-lp { width: 49px; }
.w-name { width: 352px; }
.w-qty { width: 91px; }
.w-jm { width: 88px; }
.w-price { width: 96px; }
.w-disc { width: 79px; }
.w-net { width: 145px; }
.w-vat { width: 57px; }
.w-sum { width: 120px; }
.w-gross { width: 131px; }

/* footer panel */
.foot {
  margin-top: 4px;
  padding: 16px 15px 15px 17px;
}
.foot .page-tabs {
  margin-top: 0;
}
.foot .page-tabs button {
  padding: 0 8px;
}
.summary {
  display: grid;
  grid-template-columns: 705fr 401fr 296fr;
  gap: 12px;
  padding: 15px 16px 16px;
  color: #000;
}
.summary label {
  padding-top: 4px;
}
.blue-text {
  color: #0f73cf;
}
.payments {
  display: grid;
  grid-template-columns: 154px 187px 1fr;
  gap: 5px 0;
  align-items: center;
}
.payments label {
  padding-top: 3px;
}
.payments .link-select, .discount {
  margin-left: 12px;
}
.discount {
  padding: 2px 0 0 4px;
}
.total {
  height: 36px;
  font-size: 24px;
  font-weight: bold;
}
.total input {
  text-align: right;
}
.rest {
  display: flex;
  align-items: center;
  gap: 2px;
  padding-left: 2px;
}
.rest .field {
  flex: 1;
}
.hand-small {
  width: 16px;
  height: 16px;
}
.people {
  display: grid;
  grid-template-columns: 154px 1fr;
  grid-template-rows: 26px 26px 1fr;
  row-gap: 6px;
}
.people label {
  white-space: nowrap;
}
.people .field button {
  width: 18px;
}
.term, .term-fields {
  align-self: end;
}
.term-fields {
  display: flex;
}
.term-fields .field {
  width: 127px;
}
.term-fields label {
  flex: 1;
  padding-left: 12px;
}
.term-fields .days {
  width: 81px;
}
.prepaid {
  display: flex;
  gap: 4px;
}
.prepaid .field {
  flex: 1;
}
```
